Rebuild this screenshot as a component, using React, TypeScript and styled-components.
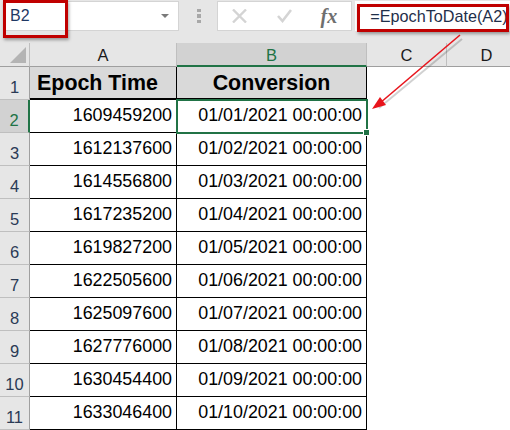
import styled, { createGlobalStyle } from "styled-components";

const GlobalStyle = createGlobalStyle`
  html, body {
    margin: 0;
    padding: 0;
    background: #ffffff;
  }
`;

const Page = styled.div`
  position: relative;
  width: 510px;
  height: 430px;
  overflow: hidden;
  background: #ffffff;
  font-family: "Liberation Sans", Arial, sans-serif;
  color: #000000;
`;

const FormulaBar = styled.div`
  height: 43px;
  box-sizing: border-box;
  padding: 1px 0 0 3px;
  background: #e6e6e6;
  display: flex;
  align-items: flex-start;
`;

const NameBox = styled.div`
  width: 176px;
  height: 30px;
  box-sizing: border-box;
  padding: 0 9px 0 6px;
  background: #ffffff;
  border: 1px solid #d4d4d4;
  display: flex;
  align-items: center;
  justify-content: space-between;
  font-size: 16px;
  color: #1f3864;
`;

const Caret = styled.span`
  width: 0;
  height: 0;
  border-left: 4px solid transparent;
  border-right: 4px solid transparent;
  border-top: 4px solid #7a7a7a;
`;

const Grip = styled.div`
  width: 4px;
  height: 14px;
  margin: 8px 16px 0 18px;
  background: repeating-linear-gradient(to bottom, #a8a8a8 0 3px, transparent 3px 5.5px);
`;

const ButtonBox = styled.div`
  width: 136px;
  height: 30px;
  box-sizing: border-box;
  background: #ffffff;
  border: 1px solid #d4d4d4;
  display: flex;
  align-items: center;
  padding-left: 14px;
  gap: 30px;
`;

const FxLabel = styled.span`
  font-family: "Liberation Serif", serif;
  font-style: italic;
  font-weight: bold;
  font-size: 20px;
  color: #6f6f6f;
  margin-left: -1px;
`;

const FormulaInput = styled.div`
  width: 155px;
  height: 30px;
  margin-left: 3px;
  box-sizing: border-box;
  padding-left: 15px;
  background: #ffffff;
  display: flex;
  align-items: center;
  font-size: 16.2px;
  color: #1f2f4a;
  white-space: nowrap;
`;

const Sheet = styled.div`
  display: grid;
  grid-template-columns: 30px 147px 190px 80px 80px;
  grid-template-rows: 24px repeat(11, 33px);
`;

const Corner = styled.div`
  position: relative;
  background: #e6e6e6;
  border-right: 1px solid #bfbfbf;
  border-bottom: 1px solid #9f9f9f;
  box-sizing: border-box;
`;

const CornerMark = styled.span`
  position: absolute;
  right: 3px;
  bottom: 3px;
  width: 0;
  height: 0;
  border-left: 16px solid transparent;
  border-bottom: 16px solid #b4b4b4;
`;

const ColumnHeader = styled.div<{ $active?: boolean }>`
  box-sizing: border-box;
  display: flex;
  align-items: center;
  justify-content: center;
  padding-top: 2px;
  font-size: 16.5px;
  background: ${(p) => (p.$active ? "#d2d2d2" : "#e6e6e6")};
  color: ${(p) => (p.$active ? "#217346" : "#1a1a1a")};
  border-right: 1px solid #bfbfbf;
  border-bottom: ${(p) => (p.$active ? "2px solid #217346" : "1px solid #9f9f9f")};
`;

const RowHeader = styled.div<{ $active?: boolean }>`
  box-sizing: border-box;
  display: flex;
  align-items: flex-end;
  justify-content: center;
  padding-bottom: 2px;
  font-size: 16.5px;
  background: ${(p) => (p.$active ? "#d2d2d2" : "#e6e6e6")};
  color: ${(p) => (p.$active ? "#217346" : "#2a3a55")};
  border-right: ${(p) => (p.$active ? "2px solid #217346" : "1px solid #9f9f9f")};
  border-bottom: 1px solid #bfbfbf;
`;

const TitleCell = styled.div<{ $inset?: number }>`
  box-sizing: border-box;
  display: flex;
  align-items: center;
  justify-content: center;
  padding: 1px ${(p) => p.$inset ?? 0}px 0 0;
  background: #d9d9d9;
  font-size: 21.4px;
  font-weight: bold;
  border-right: 1px solid #000000;
  border-bottom: 2px solid #000000;
`;

const DataCell = styled.div`
  box-sizing: border-box;
  display: flex;
  align-items: center;
  justify-content: flex-end;
  padding: 0 4px 1px 0;
  font-size: 17.85px;
  border-right: 1px solid #000000;
  border-bottom: 1px solid #000000;
  white-space: nowrap;
`;

const SelectedCell = styled(DataCell)`
  position: relative;
  outline: 2px solid #217346;
  outline-offset: -1px;
`;

const FillHandle = styled.span`
  position: absolute;
  right: -4px;
  bottom: -4px;
  width: 5px;
  height: 5px;
  background: #217346;
  border: 1px solid #ffffff;
`;

const Callout = styled.div<{ $left: number; $top: number; $width: number; $height: number }>`
  position: absolute;
  left: ${(p) => p.$left}px;
  top: ${(p) => p.$top}px;
  width: ${(p) => p.$width}px;
  height: ${(p) => p.$height}px;
  box-sizing: border-box;
  border: 3px solid #c00000;
  box-shadow: 1px 2px 3px rgba(0, 0, 0, 0.35);
`;

const ArrowLayer = styled.svg`
  position: absolute;
  left: 0;
  top: 0;
`;

const rows = [
  ["1609459200", "01/01/2021 00:00:00"],
  ["1612137600", "01/02/2021 00:00:00"],
  ["1614556800", "01/03/2021 00:00:00"],
  ["1617235200", "01/04/2021 00:00:00"],
  ["1619827200", "01/05/2021 00:00:00"],
  ["1622505600", "01/06/2021 00:00:00"],
  ["1625097600", "01/07/2021 00:00:00"],
  ["1627776000", "01/08/2021 00:00:00"],
  ["1630454400", "01/09/2021 00:00:00"],
  ["1633046400", "01/10/2021 00:00:00"],
];

export default function App() {
  return (
    <Page>
      <GlobalStyle />
      <FormulaBar>
        <NameBox>
          B2
          <Caret />
        </NameBox>
        <Grip />
        <ButtonBox>
          <svg width="15" height="14" viewBox="0 0 15 14">
            <path d="M1 0.5 L14 13.5 M14 0.5 L1 13.5" stroke="#d4d4d4" strokeWidth="2.4" />
          </svg>
          <svg width="15" height="14" viewBox="0 0 15 14">
            <path d="M1 7 L5.5 12 L14 1" stroke="#d4d4d4" strokeWidth="2.6" fill="none" />
          </svg>
          <FxLabel>fx</FxLabel>
        </ButtonBox>
        <FormulaInput>=EpochToDate(A2)</FormulaInput>
      </FormulaBar>
      <Sheet>
        <Corner>
          <CornerMark />
        </Corner>
        <ColumnHeader>A</ColumnHeader>
        <ColumnHeader $active>B</ColumnHeader>
        <ColumnHeader>C</ColumnHeader>
        <ColumnHeader>D</ColumnHeader>

        <RowHeader>1</RowHeader>
        <TitleCell $inset={11}>Epoch Time</TitleCell>
        <TitleCell>Conversion</TitleCell>
        <div />
        <div />

        {rows.map(([epoch, date], i) => (
          <Row key={epoch} n={i + 2} epoch={epoch} date={date} />
        ))}
      </Sheet>
      <Callout $left={3} $top={0} $width={65} $height={38} />
      <Callout $left={357} $top={4} $width={152} $height={28} />
      <ArrowLayer width="510" height="430" viewBox="0 0 510 430">
        <path d="M461 37 L378 106" stroke="#000000" strokeOpacity="0.18" strokeWidth="2" transform="translate(1 2)" />
        <path d="M460 35 L380 103" stroke="#e8141c" strokeWidth="1.6" />
        <path d="M372 109 L386 105 L380 97 Z" fill="#e8141c" />
      </ArrowLayer>
    </Page>
  );
}

function Row({ n, epoch, date }: { n: number; epoch: string; date: string }) {
  const selected = n === 2;
  return (
    <>
      <RowHeader $active={selected}>{n}</RowHeader>
      <DataCell>{epoch}</DataCell>
      {selected ? (
        <SelectedCell>
          {date}
          <FillHandle />
        </SelectedCell>
      ) : (
        <DataCell>{date}</DataCell>
      )}
      <div />
      <div />
    </>
  );
}
